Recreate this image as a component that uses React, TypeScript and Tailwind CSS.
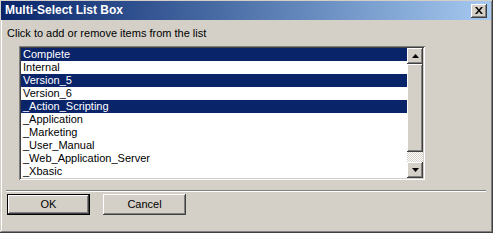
const items = [
  { label: 'Complete', selected: true },
  { label: 'Internal', selected: false },
  { label: 'Version_5', selected: true },
  { label: 'Version_6', selected: false },
  { label: '_Action_Scripting', selected: true },
  { label: '_Application', selected: false },
  { label: '_Marketing', selected: false },
  { label: '_User_Manual', selected: false },
  { label: '_Web_Application_Server', selected: false },
  { label: '_Xbasic', selected: false },
];

const raised =
  'bg-[#d4d0c8] shadow-[inset_-1px_-1px_#404040,inset_1px_1px_#fff,inset_-2px_-2px_#808080,inset_2px_2px_#d4d0c8]';

function ScrollButton({ up }: { up?: boolean }) {
  return (
    <div className={`w-[16px] h-[16px] flex items-center justify-center ${raised}`}>
      <svg width="7" height="4" viewBox="0 0 7 4">
        {up ? <polygon points="3.5,0 7,4 0,4" fill="#000" /> : <polygon points="0,0 7,0 3.5,4" fill="#000" />}
      </svg>
    </div>
  );
}

export default function App() {
  return (
    <div
      className="w-[493px] h-[233px] bg-[#d4d0c8] flex flex-col pt-[1px] pl-[1px] pr-[2px] shadow-[inset_-1px_-1px_#404040,inset_1px_1px_#d4d0c8,inset_-2px_-2px_#808080,inset_2px_2px_#fff]"
      style={{ fontFamily: '"Liberation Sans", Arial, sans-serif' }}
    >
      {/* Title bar */}
      <div className="h-[19px] flex items-center justify-between pl-[4px] pr-[4px] bg-gradient-to-r from-[#0a246a] to-[#a6caf0]">
        <span className="text-white font-bold text-[12px] leading-[13px]">Multi-Select List Box</span>
        <div className={`w-[16px] h-[14px] flex items-center justify-center ${raised}`}>
          <svg width="8" height="7" viewBox="0 0 8 7">
            <path d="M0 0 L2 0 L4 2.5 L6 0 L8 0 L5 3.5 L8 7 L6 7 L4 4.5 L2 7 L0 7 L3 3.5 Z" fill="#000" />
          </svg>
        </div>
      </div>

      {/* Body */}
      <div className="flex flex-col px-[5px]">
        <div className="mt-[7px] pl-[1px] text-[11px] leading-[13px] text-black">
          Click to add or remove items from the list
        </div>

        {/* List box */}
        <div className="mt-[6px] ml-[13px] w-[406px] h-[134px] flex bg-white p-[2px] shadow-[inset_1px_1px_#808080,inset_-1px_-1px_#fff,inset_2px_2px_#404040,inset_-2px_-2px_#d4d0c8]">
          <div className="flex-1 flex flex-col">
            {items.map((it) => (
              <div
                key={it.label}
                className={`h-[13px] pl-[2px] text-[11px] leading-[13px] whitespace-nowrap ${
                  it.selected ? 'bg-[#0a246a] text-white' : 'text-black'
                }`}
              >
                {it.label}
              </div>
            ))}
          </div>
          <div className="w-[16px] flex flex-col">
            <ScrollButton up />
            <div className={`h-[88px] ${raised}`} />
            <div className="flex-1 bg-[repeating-conic-gradient(#d4d0c8_0_25%,#fff_0_50%)] bg-[length:2px_2px]" />
            <ScrollButton />
          </div>
        </div>

        {/* Separator */}
        <div className="mt-[10px] h-[2px] border-t border-[#808080] border-b border-b-white" />

        {/* Buttons */}
        <div className="mt-[2px] pl-[1px] flex gap-[13px]">
          <button className="w-[83px] h-[21px] border border-black flex">
            <div className={`flex-1 flex items-center justify-center text-[11px] ${raised}`}>OK</div>
          </button>
          <button className={`w-[83px] h-[21px] flex items-center justify-center text-[11px] ${raised}`}>
            Cancel
          </button>
        </div>
      </div>
    </div>
  );
}
